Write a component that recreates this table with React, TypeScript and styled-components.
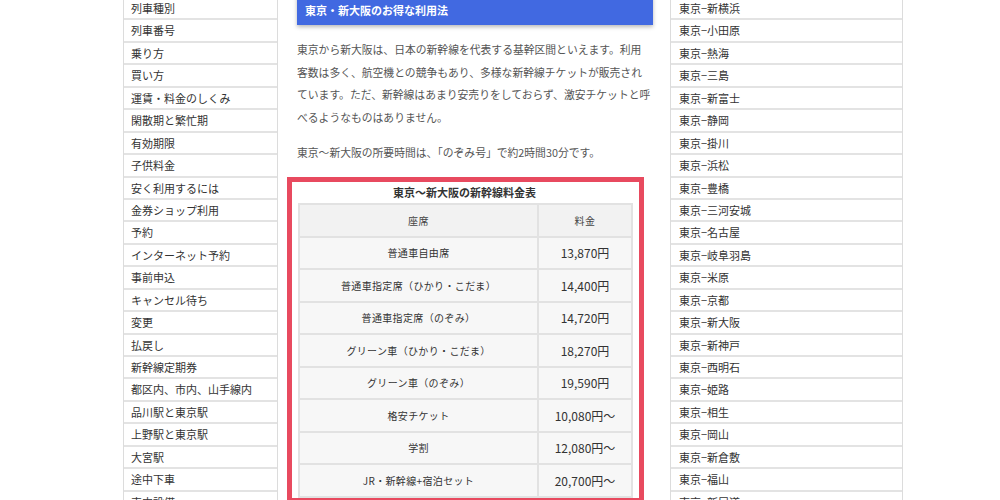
import React from "react";
import styled, { createGlobalStyle } from "styled-components";

const Global = createGlobalStyle`
  html, body { margin: 0; padding: 0; background: #fff; }
  body { font-family: "Noto Sans CJK JP", "Noto Sans", sans-serif; color: #333; overflow: hidden; }
  * { box-sizing: border-box; }
`;

const Page = styled.div`
  display: flex;
  align-items: flex-start;
  padding-left: 123px;
  margin-top: -5px;
`;

const Nav = styled.ul<{ $w: number }>`
  list-style: none;
  margin: 3px 0 0;
  padding: 0;
  width: ${(p) => p.$w}px;
  border-left: 1px solid #dcdcdc;
  border-right: 1px solid #dcdcdc;
  flex-shrink: 0;
`;

const NavItem = styled.li<{ $pad: number }>`
  height: 22.45px;
  line-height: 20.45px;
  padding-left: ${(p) => p.$pad}px;
  font-size: 11px;
  color: #333;
  border-bottom: 2px solid #e3e3e3;
  white-space: nowrap;
`;

const Main = styled.main`
  width: 392px;
  padding: 0 17px 0 19px;
  flex-shrink: 0;
`;

const Heading = styled.h2`
  margin: 0;
  background: #4169e1;
  color: #fff;
  font-size: 11px;
  font-weight: bold;
  line-height: 16px;
  padding: 7px 8px;
  box-shadow: 0 2px 4px rgba(0, 0, 0, 0.28);
`;

const Para = styled.p`
  margin: 13px 0 0;
  font-size: 10.8px;
  line-height: 22.5px;
  color: #555;
  white-space: nowrap;
`;

const Box = styled.div`
  margin: 13px 0 0 -10px;
  width: 357px;
  border: 5px solid #e84a5f;
  padding: 0 8px 0 6px;
  background: #fff;
`;

const Caption = styled.div`
  font-size: 11px;
  font-weight: bold;
  line-height: 21px;
  text-align: center;
  color: #333;
`;

const Table = styled.table`
  width: 333px;
  border-collapse: collapse;
  table-layout: fixed;
`;

const Th = styled.th<{ $w: number }>`
  width: ${(p) => p.$w}px;
  height: 33px;
  background: #f2f2f2;
  border: 2px solid #e2e2e2;
  font-size: 10px;
  font-weight: normal;
  letter-spacing: 0.4px;
  color: #444;
  text-align: center;
  padding: 0;
`;

const Seat = styled.td`
  height: 32.5px;
  background: #f7f7f7;
  border: 2px solid #e2e2e2;
  font-size: 10px;
  letter-spacing: 0.35px;
  color: #333;
  text-align: center;
  padding: 0;
  white-space: nowrap;
`;

const Price = styled(Seat)`
  font-size: 12px;
  letter-spacing: 0;
`;

const leftItems = [
  "列車種別", "列車番号", "乗り方", "買い方", "運賃・料金のしくみ", "閑散期と繁忙期",
  "有効期限", "子供料金", "安く利用するには", "金券ショップ利用", "予約", "インターネット予約",
  "事前申込", "キャンセル待ち", "変更", "払戻し", "新幹線定期券", "都区内、市内、山手線内",
  "品川駅と東京駅", "上野駅と東京駅", "大宮駅", "途中下車", "車内設備",
];

const rightItems = [
  "新横浜", "小田原", "熱海", "三島", "新富士", "静岡", "掛川", "浜松", "豊橋", "三河安城",
  "名古屋", "岐阜羽島", "米原", "京都", "新大阪", "新神戸", "西明石", "姫路", "相生", "岡山",
  "新倉敷", "福山", "新尾道",
];

const fares: [string, string][] = [
  ["普通車自由席", "13,870円"],
  ["普通車指定席（ひかり・こだま）", "14,400円"],
  ["普通車指定席（のぞみ）", "14,720円"],
  ["グリーン車（ひかり・こだま）", "18,270円"],
  ["グリーン車（のぞみ）", "19,590円"],
  ["格安チケット", "10,080円〜"],
  ["学割", "12,080円〜"],
  ["JR・新幹線+宿泊セット", "20,700円〜"],
];

export default function App() {
  return (
    <>
      <Global />
      <Page>
        <Nav $w={155}>
          {leftItems.map((t) => (
            <NavItem key={t} $pad={7}>{t}</NavItem>
          ))}
        </Nav>
        <Main>
          <Heading>東京・新大阪のお得な利用法</Heading>
          <Para>
            東京から新大阪は、日本の新幹線を代表する基幹区間といえます。利用
            <br />
            客数は多く、航空機との競争もあり、多様な新幹線チケットが販売され
            <br />
            ています。ただ、新幹線はあまり安売りをしておらず、激安チケットと呼
            <br />
            べるようなものはありません。
          </Para>
          <Para>東京〜新大阪の所要時間は、「のぞみ号」で約2時間30分です。</Para>
          <Box>
            <Caption>東京〜新大阪の新幹線料金表</Caption>
            <Table>
              <thead>
                <tr>
                  <Th $w={239}>座席</Th>
                  <Th $w={94}>料金</Th>
                </tr>
              </thead>
              <tbody>
                {fares.map(([s, p]) => (
                  <tr key={s}>
                    <Seat>{s}</Seat>
                    <Price>{p}</Price>
                  </tr>
                ))}
              </tbody>
            </Table>
          </Box>
        </Main>
        <Nav $w={233}>
          {rightItems.map((t) => (
            <NavItem key={t} $pad={8}>東京−{t}</NavItem>
          ))}
        </Nav>
      </Page>
    </>
  );
}
